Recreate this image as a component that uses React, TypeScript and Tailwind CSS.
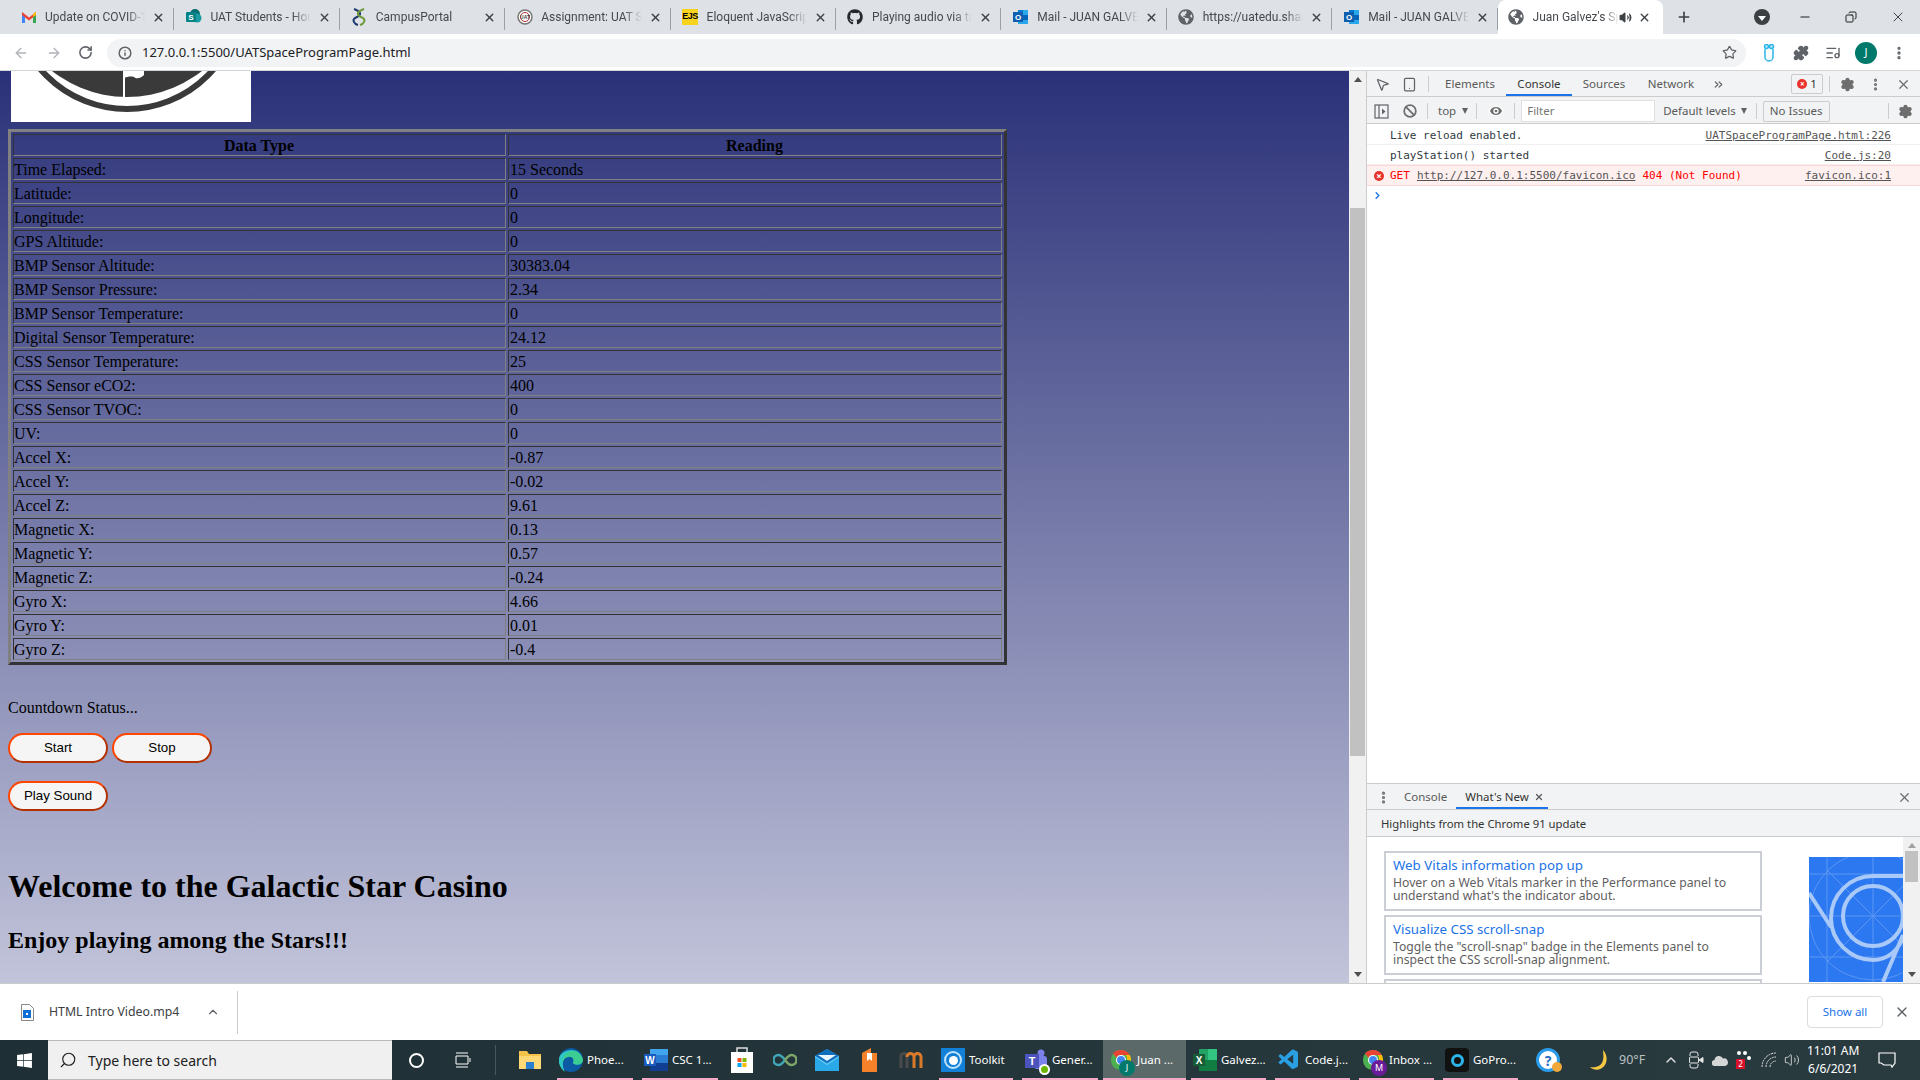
import type { ReactNode } from 'react';
import {
  ArrowLeft, ArrowRight, RotateCw, Info, Star, Puzzle, ListMusic, MoreVertical, X, Plus, Minus, Copy, ChevronUp,
  Settings, Ban, Eye, ChevronsRight, ChevronRight, Search, Volume2, MousePointer2, Tablet,
} from 'lucide-react';
import { FaGithub, FaGlobeAmericas, FaWindows } from 'react-icons/fa';
import { VscVscode } from 'react-icons/vsc';

const ui = "font-['Noto_Sans','Open_Sans',sans-serif]";

const rows: [string, string][] = [
  ['Time Elapsed:', '15 Seconds'],
  ['Latitude:', '0'],
  ['Longitude:', '0'],
  ['GPS Altitude:', '0'],
  ['BMP Sensor Altitude:', '30383.04'],
  ['BMP Sensor Pressure:', '2.34'],
  ['BMP Sensor Temperature:', '0'],
  ['Digital Sensor Temperature:', '24.12'],
  ['CSS Sensor Temperature:', '25'],
  ['CSS Sensor eCO2:', '400'],
  ['CSS Sensor TVOC:', '0'],
  ['UV:', '0'],
  ['Accel X:', '-0.87'],
  ['Accel Y:', '-0.02'],
  ['Accel Z:', '9.61'],
  ['Magnetic X:', '0.13'],
  ['Magnetic Y:', '0.57'],
  ['Magnetic Z:', '-0.24'],
  ['Gyro X:', '4.66'],
  ['Gyro Y:', '0.01'],
  ['Gyro Z:', '-0.4'],
];

function Gmail() {
  return (
    <svg width="16" height="16" viewBox="0 0 16 16">
      <path d="M1 3v11h3V7z" fill="#4285f4" />
      <path d="M15 3v11h-3V7z" fill="#34a853" />
      <path d="M1 3l7 5.5L15 3v3l-7 5.5L1 6z" fill="#ea4335" />
      <path d="M12 5l3-2v3l-3 2z" fill="#fbbc04" />
    </svg>
  );
}

function SharePoint() {
  return (
    <svg width="16" height="16" viewBox="0 0 16 16">
      <circle cx="9" cy="5" r="5" fill="#036c70" />
      <circle cx="11" cy="9" r="4.5" fill="#1a9ba1" />
      <rect x="0" y="3" width="10" height="10" rx="1" fill="#038387" />
      <text x="5" y="11" textAnchor="middle" fontSize="8" fontWeight="700" fill="#fff" fontFamily="Liberation Sans">S</text>
    </svg>
  );
}

function CampusPortal() {
  return (
    <svg width="16" height="18" viewBox="0 0 16 18" fill="none" strokeWidth="2">
      <path d="M3 1c8 3 8 6 1 9-3 2-1 6 3 7" stroke="#1f3a6e" />
      <path d="M13 1C5 4 5 7 12 10c3 2 1 6-3 7" stroke="#6f9a3c" />
    </svg>
  );
}

function Seal() {
  return (
    <svg width="16" height="16" viewBox="0 0 16 16">
      <circle cx="8" cy="8" r="7" fill="#fff" stroke="#777" strokeWidth="1.5" />
      <circle cx="8" cy="8" r="4.5" fill="#fff" stroke="#a33" strokeWidth="1" />
      <text x="8" y="10" textAnchor="middle" fontSize="5" fontWeight="700" fill="#444" fontFamily="Liberation Sans">UAT</text>
    </svg>
  );
}

function Ejs() {
  return (
    <div className="flex h-4 w-4 items-center justify-center bg-[#f7d31e] font-['Liberation_Sans',sans-serif] text-[9px] font-bold tracking-[-0.5px] text-black">
      EJS
    </div>
  );
}

function Outlook({ size = 16 }: { size?: number }) {
  return (
    <svg width={size} height={size} viewBox="0 0 16 16">
      <rect x="5" y="1" width="10" height="14" fill="#28a8ea" />
      <rect x="5" y="1" width="5" height="5" fill="#0078d4" />
      <rect x="10" y="6" width="5" height="5" fill="#0364b8" />
      <rect x="0" y="3" width="10" height="10" fill="#0f5fae" />
      <text x="5" y="11" textAnchor="middle" fontSize="8" fontWeight="700" fill="#fff" fontFamily="Liberation Sans">O</text>
    </svg>
  );
}

function Globe() {
  return <FaGlobeAmericas className="h-4 w-4 text-[#5f6368]" />;
}

function ChromeLogo({ badge, badgeColor }: { badge: string; badgeColor: string }) {
  return (
    <div className="relative h-[22px] w-[22px]">
      <svg width="22" height="22" viewBox="0 0 24 24">
        <circle cx="12" cy="12" r="11" fill="#4caf50" />
        <path d="M12 1a11 11 0 0 1 9.5 5.5H12a5.5 5.5 0 0 0-5 3L3.2 5A11 11 0 0 1 12 1z" fill="#ea4335" />
        <path d="M21.5 6.500A11 11 0 0 1 12 23l5-8.500a5.500 5.500 0 0 0 0-8z" fill="#fbbc04" />
        <circle cx="12" cy="12" r="5.500" fill="#fff" />
        <circle cx="12" cy="12" r="4.300" fill="#4285f4" />
      </svg>
      <div className={`absolute bottom-[-5px] right-[-3px] flex h-[16px] w-[16px] items-center justify-center rounded-full text-[9px] text-white ${badgeColor}`}>
        {badge}
      </div>
    </div>
  );
}

function Tab({ icon, title, active, audio }: { icon: ReactNode; title: string; active?: boolean; audio?: boolean }) {
  return (
    <div
      className={
        active
          ? 'flex h-[34px] w-[165px] shrink-0 items-center rounded-t-lg bg-white pl-[10px]'
          : 'flex h-[34px] w-[165.4px] shrink-0 items-center border-r border-r-[#9aa0a6] [border-image:linear-gradient(transparent_25%,#9aa0a6_25%,#9aa0a6_85%,transparent_85%)_1] pl-[11px]'
      }
    >
      <div className="flex w-[17px] shrink-0 justify-center">{icon}</div>
      <div className="ml-[8px] min-w-0 flex-1 overflow-hidden whitespace-nowrap font-['Roboto',sans-serif] text-[12px] text-[#45494e] [mask-image:linear-gradient(to_right,black_82%,transparent)]">
        {title}
      </div>
      {audio && <Volume2 className="h-[13px] w-[13px] shrink-0 fill-[#3c4043] text-[#3c4043]" />}
      <X className={active ? 'ml-[6px] mr-[12px] h-[13px] w-[13px] shrink-0 text-[#3c4043]' : 'ml-[7px] mr-[8px] h-[13px] w-[13px] shrink-0 text-[#3c4043]'} strokeWidth={2.5} />
    </div>
  );
}

function TabStrip() {
  return (
    <div className={`flex h-[34px] items-center bg-[#dee1e6] pl-[9px] ${ui}`}>
      <Tab icon={<Gmail />} title="Update on COVID-19 Vaccine" />
      <Tab icon={<SharePoint />} title="UAT Students - Home" />
      <Tab icon={<CampusPortal />} title="CampusPortal" />
      <Tab icon={<Seal />} title="Assignment: UAT Space" />
      <Tab icon={<Ejs />} title="Eloquent JavaScript" />
      <Tab icon={<FaGithub className="h-4 w-4 text-[#24292e]" />} title="Playing audio via tag" />
      <Tab icon={<Outlook />} title="Mail - JUAN GALVEZ" />
      <Tab icon={<Globe />} title="https://uatedu.sharepoint" />
      <Tab icon={<Outlook />} title="Mail - JUAN GALVEZ" />
      <Tab active icon={<Globe />} title="Juan Galvez's Space" audio />
      <Plus className="ml-[13px] h-[16px] w-[16px] text-[#3c4043]" strokeWidth={2.5} />
      <div className="ml-[62px] flex h-4 w-4 items-center justify-center rounded-full bg-[#3c4043]">
        <div className="mt-[2px] h-0 w-0 border-x-[4px] border-t-[5px] border-x-transparent border-t-white" />
      </div>
      <Minus className="ml-[28px] h-[14px] w-[14px] text-[#222]" />
      <Copy className="ml-[33px] h-[12px] w-[12px] -scale-x-100 text-[#222]" />
      <X className="ml-[33px] h-[16px] w-[16px] text-[#222]" strokeWidth={1.25} />
    </div>
  );
}

function Toolbar() {
  return (
    <div className={`flex h-[37px] items-center border-b border-b-[#d3d5d9] bg-white pt-[1px] ${ui}`}>
      <ArrowLeft className="ml-[13px] h-4 w-4 text-[#b0b3b8]" />
      <ArrowRight className="ml-[17px] h-4 w-4 text-[#b0b3b8]" />
      <RotateCw className="ml-[16px] h-[15px] w-[15px] text-[#5f6368]" strokeWidth={2.5} />
      <div className="ml-[14px] flex h-[28px] w-[1639px] items-center rounded-full bg-[#f1f3f4] pl-[11px]">
        <Info className="h-[14px] w-[14px] text-[#5f6368]" strokeWidth={2.5} />
        <span className="ml-[10px] text-[13px] text-[#202124]">127.0.0.1:5500/UATSpaceProgramPage.html</span>
        <Star className="ml-auto mr-[9px] h-[15px] w-[15px] text-[#5f6368]" strokeWidth={2} />
      </div>
      <svg className="ml-[16px]" width="14" height="18" viewBox="0 0 14 18" fill="none" stroke="#29b6e8" strokeWidth="1.500">
        <path d="M3 5v8a4 4 0 0 0 8 0V5" />
        <circle cx="4.500" cy="2.500" r="2" fill="#bfe9f7" />
        <circle cx="9.500" cy="2.500" r="2" fill="#bfe9f7" />
      </svg>
      <Puzzle className="ml-[17px] h-4 w-4 fill-[#5f6368] text-[#5f6368]" />
      <ListMusic className="ml-[16px] h-4 w-4 text-[#5f6368]" />
      <div className="ml-[14px] flex h-[22px] w-[22px] items-center justify-center rounded-full bg-[#00796b] text-[11px] text-white">J</div>
      <MoreVertical className="ml-[14px] h-4 w-4 text-[#5f6368]" strokeWidth={3} />
    </div>
  );
}

function PageButton({ label }: { label: string }) {
  return (
    <button className="h-[30px] w-[100px] rounded-[15px] border-2 border-t-[#ff4500] border-r-[#b33000] border-b-[#b33000] border-l-[#ff4500] bg-[#f5f5f5] font-['Liberation_Sans',sans-serif] text-[13.33px] text-black">
      {label}
    </button>
  );
}

function Logo() {
  return (
    <div className="ml-[11px] h-[51px] w-[240px] overflow-hidden bg-white">
      <svg width="240" height="51" viewBox="0 0 240 51">
        <circle cx="116" cy="-76" r="114" fill="none" stroke="#3a3a3a" strokeWidth="6" />
        <circle cx="116" cy="-95" r="121" fill="#3a3a3a" />
        <rect x="112" y="0" width="2" height="27" fill="#fff" />
        <path d="M112 0h21v4c-4 4-8 4-10 2-3-1-7 0-11 1z" fill="#fff" />
      </svg>
    </div>
  );
}

function Page() {
  const cell = 'h-[22px] border border-t-[#333] border-r-[#808080] border-b-[#808080] border-l-[#333] pt-[2px] pb-0 pl-0 pr-[1px] leading-[18px]';
  return (
    <div className="h-[912px] w-[1349px] shrink-0 overflow-hidden bg-[linear-gradient(#2a3178,#c2c4da)] font-['Liberation_Serif',serif] text-[16px] text-black">
      <Logo />
      <table className="ml-[8px] mt-[7px] w-[999px] table-fixed border-separate border-spacing-[2px] border-[3px] border-t-[#808080] border-r-[#333] border-b-[#333] border-l-[#808080]">
        <colgroup>
          <col className="w-[493px]" />
          <col />
        </colgroup>
        <thead>
          <tr>
            {['Data Type', 'Reading'].map((h) => (
              <th key={h} className={`${cell} text-center font-bold`}>
                {h}
              </th>
            ))}
          </tr>
        </thead>
        <tbody>
          {rows.map(([name, value]) => (
            <tr key={name}>
              <td className={cell}>{name}</td>
              <td className={`${cell} pl-[1px]`}>{value}</td>
            </tr>
          ))}
        </tbody>
      </table>
      <p className="ml-[8px] mt-[34px] leading-[18px]">Countdown Status...</p>
      <div className="ml-[8px] mt-[16px] flex gap-[4px]">
        <PageButton label="Start" />
        <PageButton label="Stop" />
      </div>
      <div className="ml-[8px] mt-[18px]">
        <PageButton label="Play Sound" />
      </div>
      <h1 className="ml-[8px] mt-[57px] text-[32px] font-bold leading-[37px]">Welcome to the Galactic Star Casino</h1>
      <h2 className="ml-[8px] mt-[21px] text-[24px] font-bold leading-[28px]">Enjoy playing among the Stars!!!</h2>
    </div>
  );
}

function PageScrollbar() {
  return (
    <div className="flex h-[912px] w-[17px] shrink-0 flex-col items-center bg-[#f1f1f1]">
      <div className="mt-[6px] h-0 w-0 border-x-[4px] border-b-[5px] border-x-transparent border-b-[#505050]" />
      <div className="mt-[126px] h-[548px] w-[15px] bg-[#c1c1c1]" />
      <div className="mt-auto mb-[6px] h-0 w-0 border-x-[4px] border-t-[5px] border-x-transparent border-t-[#505050]" />
    </div>
  );
}

function Sep({ className }: { className: string }) {
  return <div className={`h-[16px] w-px shrink-0 bg-[#ccc] ${className}`} />;
}

function SidebarToggle() {
  return (
    <svg className="ml-[7px]" width="15" height="15" viewBox="0 0 15 15" fill="none" stroke="#5f6368" strokeWidth="1.2">
      <rect x="1" y="1" width="13" height="13" />
      <path d="M5 1v13" />
      <path d="M8 4.500l3.500 3-3.500 3z" fill="#5f6368" stroke="none" />
    </svg>
  );
}

function ConsoleRow({ text, source, className }: { text: string; source: string; className: string }) {
  return (
    <div className={`flex items-center border-b border-b-[#f0f0f0] pl-[23px] pr-[29px] ${className}`}>
      <span className="text-[#303942]">{text}</span>
      <span className="ml-auto text-[#545454] underline">{source}</span>
    </div>
  );
}

function DevTools() {
  return (
    <div className={`flex h-[912px] w-[554px] shrink-0 flex-col border-l border-l-[#ccc] bg-white text-[11.500px] text-[#5a5a5a] ${ui}`}>
      <div className="flex h-[26px] shrink-0 items-center border-b border-b-[#ccc] bg-[#f1f3f4] pt-[1px]">
        <MousePointer2 className="ml-[8px] h-[15px] w-[15px] text-[#5f6368]" />
        <Tablet className="ml-[12px] h-[17px] w-[15px] text-[#5f6368]" />
        <Sep className="ml-[11px]" />
        <div className="flex h-full">
          <div className="ml-[16px] flex w-[50px] items-center justify-center">Elements</div>
          <div className="ml-[11px] flex w-[66px] items-center justify-center border-b-2 border-b-[#1a73e8] pt-[2px] text-[#333]">Console</div>
          <div className="ml-[7px] flex w-[50px] items-center justify-center">Sources</div>
          <div className="ml-[17px] flex w-[50px] items-center justify-center">Network</div>
        </div>
        <ChevronsRight className="ml-[16px] h-[13px] w-[13px]" />
        <div className="ml-[66px] flex h-[20px] w-[32px] items-center justify-center gap-[3px] rounded-[2px] border border-[#ccc] text-[#333]">
          <span className="flex h-[10px] w-[10px] items-center justify-center rounded-full bg-[#e8322b] text-[8px] leading-none font-bold text-white">×</span>
          1
        </div>
        <Sep className="ml-[6px]" />
        <Settings className="ml-[10px] h-[15px] w-[15px] fill-[#6e6e6e] text-[#6e6e6e]" />
        <MoreVertical className="ml-[13px] h-[15px] w-[15px] text-[#6e6e6e]" strokeWidth={3} />
        <X className="ml-[13px] h-[15px] w-[15px] text-[#6e6e6e]" />
      </div>
      <div className="flex h-[27px] shrink-0 items-center border-b border-b-[#ccc] bg-[#f1f3f4] pt-[2px]">
        <SidebarToggle />
        <Ban className="ml-[14px] h-[14px] w-[14px] text-[#6e6e6e]" strokeWidth={3} />
        <Sep className="ml-[10px]" />
        <span className="ml-[10px]">top</span>
        <div className="ml-[6px] h-0 w-0 border-x-[3.5px] border-t-[6px] border-x-transparent border-t-[#5f6368]" />
        <Sep className="ml-[8px]" />
        <Eye className="ml-[11px] h-[16px] w-[16px] fill-[#6e6e6e] text-white" />
        <Sep className="ml-[10px]" />
        <div className="ml-[6px] flex h-[22px] w-[134px] items-center border border-[#e0e0e0] bg-white pl-[5px] text-[#757575]">Filter</div>
        <span className="ml-[8px]">Default levels</span>
        <div className="ml-[5px] h-0 w-0 border-x-[3.5px] border-t-[6px] border-x-transparent border-t-[#5f6368]" />
        <Sep className="ml-[9px]" />
        <div className="ml-[6px] flex h-[21px] w-[67px] items-center justify-center rounded-[2px] border border-[#ccc]">No Issues</div>
        <Sep className="ml-[58px]" />
        <Settings className="ml-[9px] h-[15px] w-[15px] fill-[#6e6e6e] text-[#6e6e6e]" />
      </div>
      <div className="h-[659px] shrink-0 font-['DejaVu_Sans_Mono',monospace] text-[11px]">
        <ConsoleRow className="h-[21px] pt-[4px]" text="Live reload enabled." source="UATSpaceProgramPage.html:226" />
        <ConsoleRow className="h-[20px] pt-[3px]" text="playStation() started" source="Code.js:20" />
        <div className="flex h-[21px] items-center border-y border-y-[#ffd6d6] bg-[#fff0f0] pl-[7px] pr-[29px] pt-[1px] text-[#f00]">
          <span className="flex h-[10px] w-[10px] items-center justify-center rounded-full bg-[#e8322b] text-[9px] leading-none font-bold text-white">×</span>
          <span className="ml-[6px]">GET</span>
          <span className="ml-[7px] text-[#545454] underline">http://127.0.0.1:5500/favicon.ico</span>
          <span className="ml-[7px]">404 (Not Found)</span>
          <span className="ml-auto text-[#545454] underline">favicon.ico:1</span>
        </div>
        <ChevronRight className="ml-[5px] mt-[4px] h-[11px] w-[11px] text-[#1a73e8]" strokeWidth={3} />
      </div>
      <div className="flex h-[27px] shrink-0 items-center border-y border-y-[#ccc] bg-[#f1f3f4] pt-[1px]">
        <MoreVertical className="ml-[9px] h-[15px] w-[15px] text-[#6e6e6e]" strokeWidth={3} />
        <span className="ml-[13px]">Console</span>
        <div className="ml-[9px] flex h-full w-[92px] items-center gap-[5px] border-b-2 border-b-[#1a73e8] pl-[9px] pt-[2px] text-[#333]">
          What's New
          <X className="h-[10px] w-[10px] text-[#5a5a5a]" strokeWidth={3} />
        </div>
        <X className="ml-auto mr-[8px] h-[15px] w-[15px] text-[#6e6e6e]" />
      </div>
      <div className="flex h-[27px] shrink-0 items-center border-b border-b-[#ccc] bg-[#f1f3f4] pl-[14px] pt-[2px] text-[11.300px] text-[#333]">Highlights from the Chrome 91 update</div>
      <div className="flex min-h-0 flex-1 overflow-hidden">
        <div className="ml-[17px] mt-[14px] flex w-[378px] shrink-0 flex-col gap-[4px]">
          <WhatsNewCard title="Web Vitals information pop up" lines={['Hover on a Web Vitals marker in the Performance panel to', "understand what's the indicator about."]} />
          <WhatsNewCard title="Visualize CSS scroll-snap" lines={['Toggle the "scroll-snap" badge in the Elements panel to', 'inspect the CSS scroll-snap alignment.']} />
          <div className="h-[60px] shrink-0 border-2 border-[#ccced6]" />
        </div>
        <div className="ml-[47px] mt-[20px] h-[125px] w-[94px] shrink-0 bg-[#2b78f0]">
          <svg width="94" height="125" viewBox="0 0 94 125" fill="none">
            <g stroke="#5c97f3" strokeWidth="1">
              <path d="M0 17h94M0 59h94M0 100h94M18 0v125M64 0v125M18 13l92 92M18 105l92-92" />
              <circle cx="64" cy="59" r="64" />
            </g>
            <circle cx="64" cy="59" r="30" stroke="#a9c9f9" strokeWidth="4" />
            <path d="M94 19H64a42 42 0 0 0 0 84c15 0 25-10 30-22M0 36l22 34M94 78l-20 47" stroke="#a9c9f9" strokeWidth="4" />
          </svg>
        </div>
        <div className="flex w-[17px] shrink-0 flex-col items-center bg-[#f1f1f1]">
          <div className="mt-[6px] h-0 w-0 border-x-[4px] border-b-[5px] border-x-transparent border-b-[#a0a0a0]" />
          <div className="mt-[3px] h-[31px] w-[13px] bg-[#c1c1c1]" />
          <div className="mt-auto mb-[6px] h-0 w-0 border-x-[4px] border-t-[5px] border-x-transparent border-t-[#505050]" />
        </div>
      </div>
    </div>
  );
}

function WhatsNewCard({ title, lines }: { title: string; lines: string[] }) {
  return (
    <div className="h-[60px] shrink-0 border-2 border-[#ccced6] pl-[7px] pt-[2px]">
      <div className="text-[13.300px] leading-[20px] text-[#1a73e8]">{title}</div>
      <div className="mt-[1px] text-[12.200px] leading-[13px] text-[#5f5f5f]">
        {lines.map((l) => (
          <div key={l}>{l}</div>
        ))}
      </div>
    </div>
  );
}

function DownloadBar() {
  return (
    <div className={`flex h-[57px] items-center border-t border-t-[#ccc] bg-white ${ui}`}>
      <svg className="ml-[21px]" width="13" height="17" viewBox="0 0 13 17">
        <path d="M.5.5h8l4 4v12H.5z" fill="#fff" stroke="#888" />
        <rect x="2" y="6" width="8" height="8" fill="#0f6fd6" />
        <rect x="5" y="9" width="2" height="2" fill="#fff" />
      </svg>
      <span className="ml-[15px] w-[131px] whitespace-nowrap text-[12.300px] text-[#3c4043]">HTML Intro Video.mp4</span>
      <ChevronUp className="ml-[26px] h-[14px] w-[14px] text-[#5f6368]" />
      <div className="ml-[17px] h-[43px] w-px bg-[#ccc]" />
      <div className="ml-auto flex h-[32px] w-[76px] items-center justify-center rounded-[4px] border border-[#dadce0] text-[11.500px] text-[#1a73e8]">Show all</div>
      <X className="ml-[11px] mr-[10px] h-[16px] w-[16px] text-[#5f6368]" />
    </div>
  );
}

function TaskItem({ className, icon, label, active }: { className: string; icon: ReactNode; label: string; active?: boolean }) {
  return (
    <div className={`relative flex h-[40px] shrink-0 items-center gap-[4px] ${active ? 'bg-[#5b6a69] pl-[6px]' : 'pl-[2px]'} ${className}`}>
      <div className="flex w-[24px] shrink-0 justify-center">{icon}</div>
      <span className="whitespace-nowrap text-[11.500px] text-white">{label}</span>
      <div className="absolute inset-x-0 bottom-0 h-[2px] bg-[#f5a9c6]" />
    </div>
  );
}

function TaskIcon({ className, children }: { className: string; children: ReactNode }) {
  return <div className={`flex h-[40px] shrink-0 items-center justify-center ${className}`}>{children}</div>;
}

function EdgeLogo() {
  return (
    <svg width="24" height="24" viewBox="0 0 24 24">
      <circle cx="12" cy="12" r="12" fill="#0c59a4" />
      <path d="M0 11C1 1 21-3 24 12c0 5-8 6-10 3 2-4-1-7-5-6-5 1-7 7-3 15C2 21-1 16 0 11z" fill="#2fc6c4" />
      <path d="M14 3c5 0 9 4 10 9 0 5-8 6-10 3 2-4-1-7-5-6-3 .5-5 3-5.500 6C3 8 8 3 14 3z" fill="#41d07f" opacity=".7" />
    </svg>
  );
}

function Taskbar() {
  return (
    <div className={`flex h-[40px] items-center bg-[linear-gradient(90deg,#1e3035,#2a3b40)] ${ui}`}>
      <TaskIcon className="w-[48px]"><FaWindows className="h-[17px] w-[17px] text-white" /></TaskIcon>
      <div className="flex h-[40px] w-[344px] items-center border-y border-y-[#b8b8b8] bg-[#f0f0f0] pl-[11px] text-[14px] text-[#202020]">
        <Search className="h-[18px] w-[18px] -scale-x-100 text-[#202020]" strokeWidth={1.5} />
        <span className="ml-[11px]">Type here to search</span>
      </div>
      <TaskIcon className="w-[48px]"><div className="h-[15px] w-[15px] rounded-full border-2 border-white" /></TaskIcon>
      <TaskIcon className="w-[46px]">
        <svg width="16" height="16" viewBox="0 0 16 16" fill="none" stroke="#fff" strokeWidth="1"><path d="M1 1h12M1 15h12M1 4h12v8H1zM15 6v4" /></svg>
      </TaskIcon>
      <div className="ml-[9px] h-[30px] w-px bg-[#46585c]" />
      <TaskIcon className="ml-[13px] w-[42px]">
        <svg width="22" height="18" viewBox="0 0 22 18"><path d="M0 0h8l2 3h12v15H0z" fill="#f5c34a" /><path d="M0 5h22v13H0z" fill="#ffd976" /><path d="M7 11h8v7H7z" fill="#2a7fd0" /></svg>
      </TaskIcon>
      <TaskItem className="ml-[6px] w-[76px]" label="Phoe..." icon={<EdgeLogo />} />
      <TaskItem
        className="ml-[9px] w-[76px]"
        label="CSC 1..."
        icon={
          <svg width="24" height="22" viewBox="0 0 24 22"><rect x="6" y="0" width="18" height="22" rx="1" fill="#2b7cd3" /><rect x="6" y="0" width="18" height="6" fill="#41a5ee" /><rect x="6" y="14" width="18" height="8" fill="#103f91" /><rect x="0" y="5" width="12" height="12" fill="#185abd" /><text x="6" y="14.500" textAnchor="middle" fontSize="10" fontWeight="700" fill="#fff" fontFamily="Liberation Sans">W</text></svg>
        }
      />
      <TaskIcon className="ml-[3px] w-[42px]">
        <svg width="24" height="26" viewBox="0 0 24 26"><path d="M7 6V1h10v5" fill="none" stroke="#ddd" strokeWidth="1.500" /><rect x="1" y="5" width="22" height="21" fill="#fff" /><rect x="7.500" y="11" width="4" height="4" fill="#f25022" /><rect x="12.500" y="11" width="4" height="4" fill="#7fba00" /><rect x="7.500" y="16" width="4" height="4" fill="#00a4ef" /><rect x="12.500" y="16" width="4" height="4" fill="#ffb900" /></svg>
      </TaskIcon>
      <TaskIcon className="w-[43px]">
        <svg width="24" height="14" viewBox="0 0 24 14" fill="none" strokeWidth="2.500"><path d="M12 7C9 3 7 2 5.500 2a5 5 0 0 0 0 10C7 12 9 11 12 7" stroke="#3fa7b6" /><path d="M12 7c3-4 5-5 6.500-5a5 5 0 0 1 0 10C17 12 15 11 12 7" stroke="#7ea66a" /></svg>
      </TaskIcon>
      <TaskIcon className="w-[42px]">
        <svg width="24" height="22" viewBox="0 0 24 22"><path d="M0 7l12-7 12 7v15H0z" fill="#29a9e8" /><path d="M0 7l12-7 12 7-12 7z" fill="#0f6fbd" /><path d="M3 6h18l-9 6z" fill="#e8f6fd" /><path d="M0 7l12 8 12-8v1l-12 8-12-8z" fill="#7fd0f5" /></svg>
      </TaskIcon>
      <TaskIcon className="w-[42px]">
        <svg width="15" height="24" viewBox="0 0 15 24"><path d="M0 5l9-5v5h6v19H0z" fill="#f5822a" /><path d="M5 5h5v8l-2.500-2L5 13z" fill="#fff" /></svg>
      </TaskIcon>
      <TaskIcon className="w-[42px]">
        <svg width="24" height="16" viewBox="0 0 24 16" fill="none" strokeWidth="3"><path d="M2 16V5" stroke="#4a4a4a" /><path d="M8 16V4a3 3 0 0 0-6 1" stroke="#4a4a4a" /><path d="M8 5a3.500 3.500 0 0 1 7 0v11M15 5a3.500 3.500 0 0 1 7 0v11" stroke="#d97a2b" /></svg>
      </TaskIcon>
      <TaskItem
        className="ml-[7px] w-[74px]"
        label="Toolkit"
        icon={
          <div className="flex h-[24px] w-[24px] items-center justify-center bg-[#1380d8]">
            <div className="flex h-[18px] w-[18px] items-center justify-center rounded-full border-2 border-[#bfe3fb]">
              <div className="h-[9px] w-[9px] rounded-full bg-white" />
            </div>
          </div>
        }
      />
      <TaskItem
        className="ml-[9px] w-[76px]"
        label="Gener..."
        icon={
          <div className="relative h-[24px] w-[24px]">
            <svg width="24" height="24" viewBox="0 0 24 24"><circle cx="17" cy="5" r="3.500" fill="#7b83eb" /><rect x="10" y="8" width="13" height="13" rx="3" fill="#7b83eb" /><rect x="1" y="6" width="14" height="14" fill="#4b53bc" /><text x="8" y="17" textAnchor="middle" fontSize="11" fontWeight="700" fill="#fff" fontFamily="Liberation Sans">T</text></svg>
            <div className="absolute bottom-[-3px] right-[-2px] h-[11px] w-[11px] rounded-full border-2 border-white bg-[#6bb700]" />
          </div>
        }
      />
      <TaskItem active className="ml-[5px] w-[83px]" label="Juan ..." icon={<ChromeLogo badge="J" badgeColor="bg-[#00796b]" />} />
      <TaskItem
        className="ml-[5px] w-[75px]"
        label="Galvez..."
        icon={
          <svg width="24" height="22" viewBox="0 0 24 22"><rect x="6" y="0" width="18" height="22" rx="1" fill="#21a366" /><rect x="15" y="0" width="9" height="11" fill="#33c481" /><rect x="6" y="11" width="18" height="11" fill="#107c41" /><rect x="0" y="5" width="12" height="12" fill="#185c37" /><text x="6" y="14.500" textAnchor="middle" fontSize="10" fontWeight="700" fill="#fff" fontFamily="Liberation Sans">X</text></svg>
        }
      />
      <TaskItem className="ml-[9px] w-[75px]" label="Code.j..." icon={<VscVscode className="h-[24px] w-[24px] text-[#2a9fe2]" />} />
      <TaskItem className="ml-[9px] w-[75px]" label="Inbox ..." icon={<ChromeLogo badge="M" badgeColor="bg-[#6a1b9a]" />} />
      <TaskItem
        className="ml-[9px] w-[75px]"
        label="GoPro..."
        icon={
          <div className="flex h-[24px] w-[24px] items-center justify-center rounded-[4px] bg-[#111]">
            <div className="h-[13px] w-[13px] rounded-full border-[3px] border-[#2bb5e8]" />
          </div>
        }
      />
      <TaskIcon className="w-[60px]">
        <div className="relative flex h-[24px] w-[24px] items-center justify-center rounded-full border-[3px] border-[#2b9be8] bg-white text-[14px] font-bold text-[#1f6fc0]">
          ?
          <div className="absolute bottom-[-3px] right-[-5px] h-[10px] w-[10px] rounded-full bg-[#f2a93b]" />
        </div>
      </TaskIcon>
      <svg className="ml-[12px]" width="20" height="20" viewBox="0 0 20 20">
        <path d="M13 0c5 5 5 14-1 18-4 3-9 2-12-1 6 1 12-1 13-7 1-4 0-7 0-10z" fill="#f7c843" />
      </svg>
      <span className="ml-[9px] text-[12.500px] text-[#b9c0c2]">90°F</span>
      <ChevronUp className="ml-[18px] h-[16px] w-[16px] text-[#e5e5e5]" />
      <svg className="ml-[9px]" width="16" height="18" viewBox="0 0 16 18" fill="none" stroke="#e5e5e5" strokeWidth="1">
        <path d="M2 5V3a2 2 0 0 1 2-2h4a2 2 0 0 1 2 2v2M2 13v2a2 2 0 0 0 2 2h4a2 2 0 0 0 2-2v-2" />
        <rect x="1.500" y="6" width="9" height="6" rx="1" />
        <path d="M11 9l4-2.500v5z" fill="#e5e5e5" />
      </svg>
      <svg className="ml-[8px]" width="16" height="11" viewBox="0 0 16 11"><path d="M3 11a3 3 0 0 1-.5-6A4.500 4.500 0 0 1 11 3.500 3.800 3.800 0 0 1 13 11z" fill="#d5d5d5" /></svg>
      <div className="relative ml-[8px] h-[18px] w-[16px]">
        <svg width="16" height="11" viewBox="0 0 16 11" fill="#fff"><rect x="1" y="0" width="4" height="4" rx="2" /><rect x="7" y="0" width="4" height="4" rx="2" /><rect x="11" y="5" width="4" height="4" rx="2" /></svg>
        <div className="absolute bottom-0 left-0 flex h-[10px] w-[9px] items-center justify-center bg-[#d8102a] text-[8px] leading-none text-white">2</div>
      </div>
      <svg className="ml-[9px]" width="16" height="16" viewBox="0 0 16 16" fill="none" stroke="#e5e5e5" strokeWidth="1" strokeDasharray="2 0.8">
        <path d="M1 15A14 14 0 0 1 15 1M5 15A10 10 0 0 1 15 5M9 15a6 6 0 0 1 6-6" />
      </svg>
      <Volume2 className="ml-[7px] h-[16px] w-[16px] text-[#e5e5e5]" strokeWidth={1.25} />
      <div className="ml-[3px] w-[60px] text-center text-[12px] leading-[18px] text-white">
        <div>11:01 AM</div>
        <div>6/6/2021</div>
      </div>
      <svg className="ml-[15px]" width="18" height="17" viewBox="0 0 18 17" fill="none" stroke="#fff" strokeWidth="1.200">
        <path d="M1 1h16v10l-3 4-1-2H6l-3-2H1z" />
      </svg>
    </div>
  );
}

export default function App() {
  return (
    <div className="h-[1080px] w-[1920px] overflow-hidden bg-white">
      <TabStrip />
      <Toolbar />
      <div className="flex">
        <Page />
        <PageScrollbar />
        <DevTools />
      </div>
      <DownloadBar />
      <Taskbar />
    </div>
  );
}
